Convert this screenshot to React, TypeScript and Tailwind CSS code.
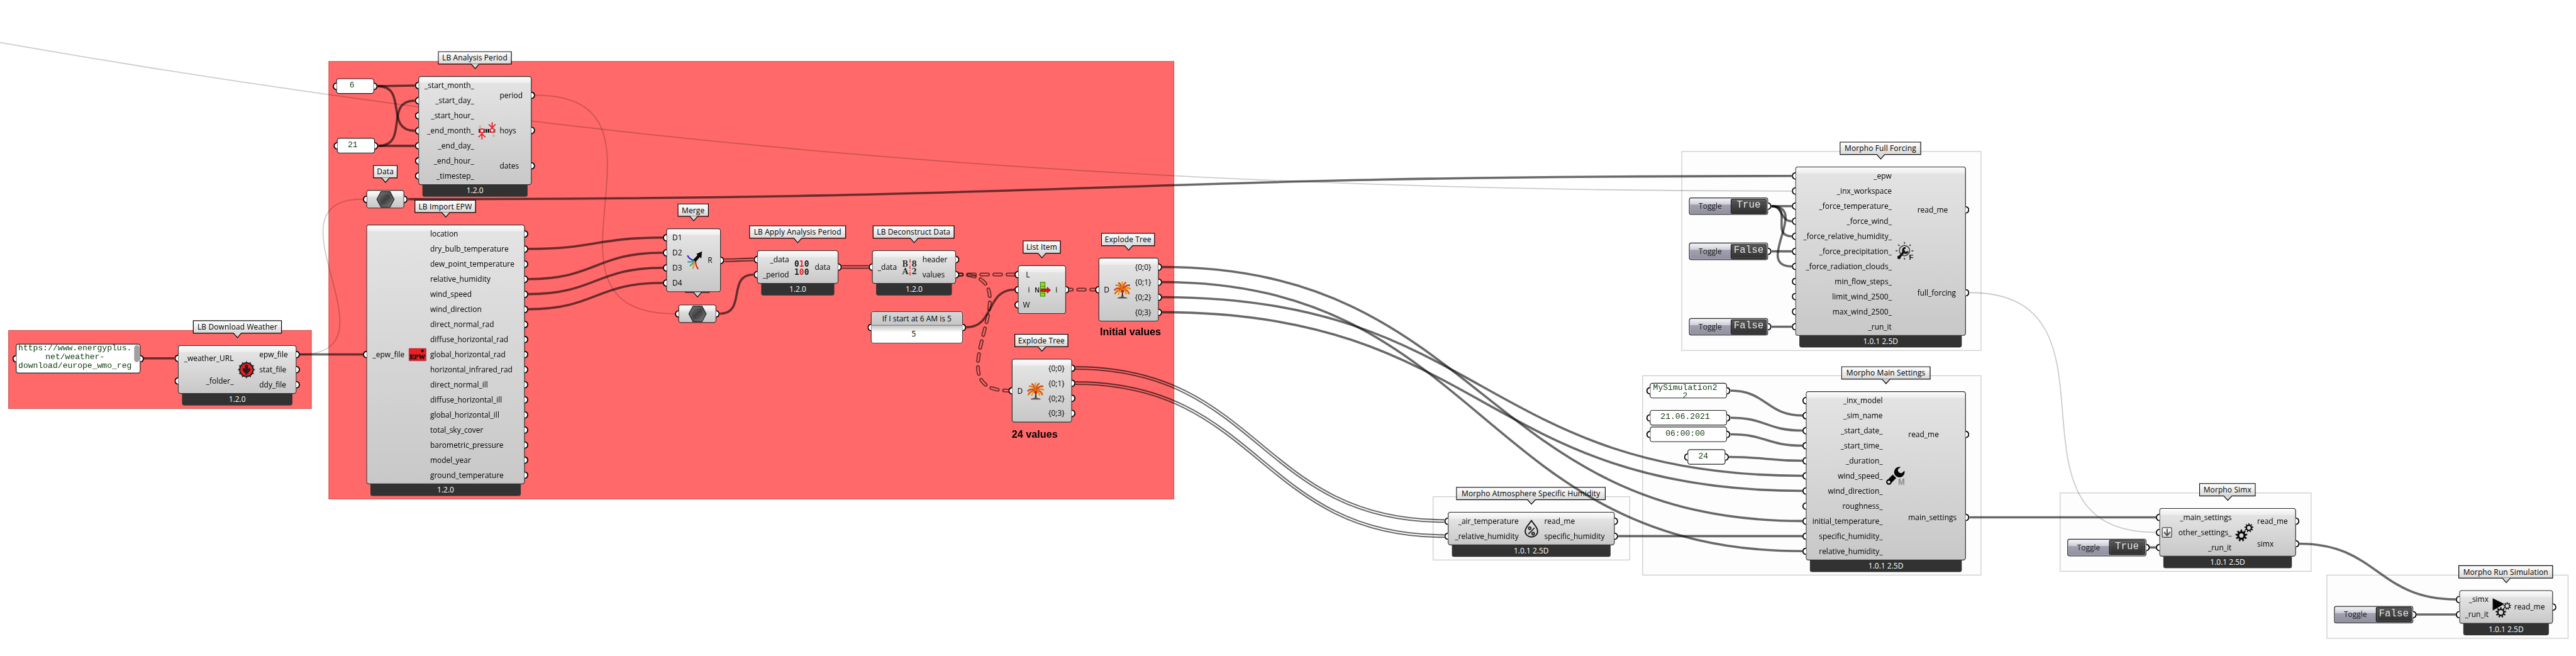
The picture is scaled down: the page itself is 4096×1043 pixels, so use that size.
import React from "react";

type Point = [number, number];

const SANS = "font-['Open_Sans','Noto_Sans',sans-serif]";
const MONO = "font-['Liberation_Mono',monospace]";

/* ---------- Icons (48 x 48 drawing box) ---------- */

function Icon({ children }: { children: React.ReactNode }) {
  return (
    <svg width="48" height="48" viewBox="0 0 48 48" className="block shrink-0 overflow-visible">
      {children}
    </svg>
  );
}

function gearPath(cx: number, cy: number, r: number, hole: number, teeth = 9) {
  const inner = r * 0.7;
  const step = (Math.PI * 2) / teeth;
  const at = (rad: number, a: number) => `${(cx + rad * Math.cos(a)).toFixed(2)} ${(cy + rad * Math.sin(a)).toFixed(2)}`;
  const pts: string[] = [];
  for (let i = 0; i < teeth; i++) {
    const a = i * step - Math.PI / 2;
    pts.push(at(inner, a - step * 0.3), at(r, a - step * 0.2), at(r, a + step * 0.2), at(inner, a + step * 0.3));
  }
  return `M${pts.join("L")}Z M${cx - hole} ${cy}a${hole} ${hole} 0 1 0 ${hole * 2} 0a${hole} ${hole} 0 1 0 ${-hole * 2} 0Z`;
}

const DownloadIcon = () => (
  <Icon>
    {[0, 30, 60, 90, 120, 150, 180, 210, 240, 270, 300, 330].map((a) => (
      <path key={a} d="M21.5 5L24 0.5L26.5 5Z" fill="#222" transform={`rotate(${a} 24 24)`} />
    ))}
    <circle cx="24" cy="24" r="18" fill="#ee1c24" stroke="#222" strokeWidth="3.5" />
    <path d="M20 11h8v11l6-3v7L24 38 14 26v-7l6 3Z" fill="#231f20" />
  </Icon>
);

const PeriodIcon = () => (
  <Icon>
    <path d="M2.5 24H46" stroke="#111" strokeWidth="10" strokeDasharray="4 2" />
    <path d="M6 9v8M42 33v8" stroke="#c9b9b5" strokeWidth="6" />
    <circle cx="11" cy="24" r="5" fill="#fff" stroke="#ee1c24" strokeWidth="3" />
    <circle cx="38" cy="23" r="5" fill="#fff" stroke="#ee1c24" strokeWidth="3" />
    <path d="M38 1v15M29 7l9 9 9-9M11 47V32M2 41l9-9 9 9" fill="none" stroke="#ee1c24" strokeWidth="3" />
  </Icon>
);

const EpwIcon = () => (
  <Icon>
    <rect x="1" y="7.5" width="46" height="33" rx="1.5" fill="#ee1c24" stroke="#7a3a3c" strokeWidth="1.5" strokeDasharray="3 2" />
    <circle cx="37" cy="14" r="4" fill="#222" />
    <text x="24" y="36" textAnchor="middle" textLength="41" lengthAdjust="spacingAndGlyphs" fontSize="17" fontWeight="700" fontFamily="Liberation Serif, serif" fill="#1a1010" stroke="#1a1010" strokeWidth="0.8">
      EPW
    </text>
  </Icon>
);

const MergeIcon = () => (
  <Icon>
    <g fill="none" strokeWidth="3.6" strokeLinecap="round">
      <path d="M5 12Q10 22 22 24" stroke="#2a1fe0" />
      <path d="M6 28Q14 29 22 25" stroke="#2aa39b" />
      <path d="M12 38Q18 33 22 26" stroke="#5aa53a" />
      <path d="M19 45Q22 36 23 27" stroke="#c9a03a" />
      <path d="M32 46Q26 38 26 27" stroke="#e02428" />
    </g>
    <path d="M20 22L31 10 28 7 43 0 41 19 37 15 26 28Z" fill="#0a0a0a" />
  </Icon>
);

const BINARY_DIGITS = [
  { text: "0", fill: "#1a1a1a", x: 4, y: 22 },
  { text: "1", fill: "#ee1c24", x: 17, y: 22 },
  { text: "0", fill: "#1a1a1a", x: 30, y: 22 },
  { text: "1", fill: "#1a1a1a", x: 4, y: 44 },
  { text: "0", fill: "#ee1c24", x: 17, y: 44 },
  { text: "0", fill: "#1a1a1a", x: 30, y: 44 },
];

const BinaryIcon = () => (
  <Icon>
    <g fontFamily="DejaVu Sans Mono, monospace" fontWeight="700" fontSize="24">
      {BINARY_DIGITS.map((d, i) => (
        <text key={i} x={d.x} y={d.y} textLength="13" lengthAdjust="spacingAndGlyphs" fill={d.fill}>
          {d.text}
        </text>
      ))}
    </g>
  </Icon>
);

const DeconstructIcon = () => (
  <Icon>
    <g fontFamily="DejaVu Serif, serif" fontWeight="700" fontSize="22" fill="#2c2c2c">
      <text x="4" y="22" textLength="16" lengthAdjust="spacingAndGlyphs">B</text>
      <text x="29" y="22" textLength="14" lengthAdjust="spacingAndGlyphs">8</text>
      <text x="4" y="43" textLength="17" lengthAdjust="spacingAndGlyphs">A</text>
      <text x="29" y="43" textLength="14" lengthAdjust="spacingAndGlyphs">2</text>
    </g>
    <path d="M25 3V46" stroke="#f0484e" strokeWidth="3.2" strokeDasharray="9 3 2 3" />
  </Icon>
);

const ListItemIcon = () => (
  <Icon>
    <rect x="18" y="4" width="12" height="37" fill="#8fe01c" stroke="#3b7d10" strokeWidth="1.8" />
    <path d="M18 15h12M18 33h12" stroke="#3b7d10" strokeWidth="1.5" />
    <text x="3" y="31" fontFamily="Liberation Sans, sans-serif" fontWeight="700" fontSize="18" fill="#222">N</text>
    <path d="M19 21.5h17V17L45 25l-9 8v-4.500H19Z" fill="#d9151a" stroke="#7d0d10" strokeWidth="1.2" />
  </Icon>
);

const TreeIcon = () => (
  <Icon>
    <path d="M24 25L22 44h5L26 25Z" fill="#43302f" />
    <path d="M12 46Q24 41 37 46Z" fill="#5b4a4a" stroke="#5b4a4a" strokeWidth="2" />
    <g fill="none" strokeLinecap="round" strokeWidth="4.200">
      <path d="M25 25Q12 22 5 34" stroke="#e0620f" />
      <path d="M25 24Q12 16 4 24" stroke="#c8431a" />
      <path d="M25 24Q16 10 8 12" stroke="#ea7a10" />
      <path d="M25 24Q20 8 15 6" stroke="#d24f17" />
      <path d="M25 24Q24 8 24 4" stroke="#f09a12" />
      <path d="M25 24Q28 8 33 5" stroke="#d8591a" />
      <path d="M25 24Q34 10 43 12" stroke="#c8431a" />
      <path d="M25 24Q37 16 45 21" stroke="#ec860f" />
      <path d="M25 25Q38 21 42 34" stroke="#de5c12" />
      <path d="M25 25Q16 26 14 36" stroke="#f0a012" />
      <path d="M25 25Q33 26 35 35" stroke="#f09412" />
    </g>
    <circle cx="24.500" cy="28" r="4" fill="#c01f1a" />
  </Icon>
);

const ForcingIcon = () => (
  <Icon>
    {[0, 45, 90, 135, 180, 225, 270, 315].map((a) => (
      <path key={a} d="M24 4V-1" stroke="#444" strokeWidth="3" transform={`rotate(${a} 24 22.500)`} />
    ))}
    <circle cx="24" cy="22" r="13.500" fill="none" stroke="#4a4a4a" strokeWidth="3" />
    <path d="M23 24L10 40" stroke="#111" strokeWidth="6" strokeLinecap="round" />
    <circle cx="9.500" cy="40" r="4.500" fill="#111" />
    <path d="M27 15a6.500 6.500 0 1 0 5.500 9" fill="none" stroke="#111" strokeWidth="5" />
    <text x="36" y="47" fontFamily="Liberation Sans, sans-serif" fontWeight="700" fontSize="19" fill="#222">F</text>
  </Icon>
);

const WrenchIcon = () => (
  <Icon>
    <path d="M38 0.300A14 14 0 1 0 47.800 10L42 15.500Q36.500 18 32.500 13.500Q29 9 31.500 5Z" fill="#050505" />
    <path d="M21.500 25L6.700 39.800" stroke="#050505" strokeWidth="13" />
    <circle cx="6.700" cy="40" r="7.300" fill="#050505" />
    <circle cx="6.700" cy="40" r="3.700" fill="#e4e4e4" />
    <text x="31" y="47.500" textLength="18" lengthAdjust="spacingAndGlyphs" fontFamily="Liberation Sans, sans-serif" fontWeight="700" fontSize="24" fill="#8b8b8b">M</text>
  </Icon>
);

const HumidityIcon = () => (
  <Icon>
    <path d="M24 2C20 10 7.500 20 7.500 30.500a16.500 15.500 0 0 0 33 0C40.500 20 28 10 24 2Z" fill="none" stroke="#1c1c1c" strokeWidth="3.200" strokeLinejoin="round" />
    <circle cx="19.500" cy="22.500" r="3.200" fill="none" stroke="#1c1c1c" strokeWidth="3" />
    <circle cx="28.500" cy="37" r="3.200" fill="none" stroke="#1c1c1c" strokeWidth="3" />
    <path d="M16 38L32 22" stroke="#1c1c1c" strokeWidth="3" />
  </Icon>
);

const GearsIcon = () => (
  <Icon>
    <path d={gearPath(16, 32, 15.8, 5.6)} fill="#0a0a0a" fillRule="evenodd" />
    <path d={gearPath(36, 11.5, 11.8, 4.8)} fill="#0a0a0a" fillRule="evenodd" />
  </Icon>
);

const RunIcon = () => (
  <Icon>
    <path d="M1 0.500L32 15.500L1 33Z" fill="#050505" />
    <path d={gearPath(22.5, 38, 13.8, 6)} fill="#0f0f0f" fillRule="evenodd" />
    <path d={gearPath(39.5, 21, 10, 4.8)} fill="#0f0f0f" fillRule="evenodd" />
  </Icon>
);

const HexIcon = () => (
  <Icon>
    <defs>
      <linearGradient id="hexFill" x1="0" y1="0" x2="1" y2="1">
        <stop offset="0" stopColor="#7d7d7d" />
        <stop offset="0.5" stopColor="#3f3f3f" />
        <stop offset="1" stopColor="#858585" />
      </linearGradient>
    </defs>
    <path d="M12 3.500H36L47 24 36 44.500H12L1 24Z" fill="url(#hexFill)" stroke="#2a2a2a" strokeWidth="2" />
    <path d="M14.500 7.500H33.500L42.500 24 33.500 40.500H14.500L5.500 24Z" fill="none" stroke="#6f6f6f" strokeWidth="1.500" />
  </Icon>
);

/* ---------- Canvas building blocks ---------- */

function Grip({ side }: { side: "in" | "out" }) {
  return (
    <i
      className={
        side === "in"
          ? "absolute top-1/2 -left-[11px] h-5 w-[10px] -translate-y-1/2 rounded-l-full border-[3.5px] border-r-0 border-black bg-white"
          : "absolute top-1/2 -right-[11px] h-5 w-[10px] -translate-y-1/2 rounded-r-full border-[3.5px] border-l-0 border-black bg-white"
      }
    />
  );
}

function Group({ x, y, r, b, red = false }: { x: number; y: number; r: number; b: number; red?: boolean }) {
  return (
    <div
      className={red ? "absolute border-2 border-[#cf5f5f] bg-[#ff6969]" : "absolute border-2 border-[#cacaca] bg-[#fdfdfd]"}
      style={{ left: x, top: y, width: r - x, height: b - y }}
    />
  );
}

function Tag({ x, r, y, tip, text }: { x: number; r: number; y: number; tip: number; text: string }) {
  return (
    <div
      className="absolute flex h-[35px] items-center justify-center border-2 border-black bg-linear-to-b from-white to-[#d9d9d9]"
      style={{ left: x, top: y, width: r - x }}
    >
      <span className={`${SANS} text-[20px] leading-none tracking-[0.2px] whitespace-nowrap text-black`}>{text}</span>
      <svg width="24" height="15" viewBox="0 0 24 15" className="absolute top-[31px]" style={{ left: tip - x - 14 }}>
        <path d="M2 0V1L12 13 22 1V0Z" fill="#d9d9d9" />
        <path d="M1.500 1L12 13 22.500 1" fill="none" stroke="#000" strokeWidth="2" />
      </svg>
    </div>
  );
}

interface NodeProps {
  x: number;
  r: number;
  y: number;
  h: number;
  inputs: string[];
  inRight: number;
  outputs: string[];
  outLeft: number;
  icon: React.ReactNode;
  version?: string;
  variable?: string;
}

function Component({ x, r, y, h, inputs, inRight, outputs, outLeft, icon, version, variable }: NodeProps) {
  return (
    <div className="absolute" style={{ left: x, top: y, width: r - x }}>
      <div
        className="relative z-10 flex rounded-[7px] border-2 border-[#333] bg-[#c8c8c8] bg-[linear-gradient(to_bottom,#fdfdfd_0,#ececec_16px,#e3e3e3_17px,#c8c8c8_100%)] py-[2.5px]"
        style={{ height: h }}
      >
        <ul className="flex flex-col" style={{ width: inRight - x - 2 }}>
          {inputs.map((name) => (
            <li key={name} className={`relative flex flex-1 items-center justify-end ${SANS} text-[20px] leading-none whitespace-nowrap text-black`}>
              <Grip side="in" />
              {name === variable && (
                <b className="absolute left-[5px] flex h-[28px] w-[27px] items-center justify-center rounded-[4px] border-2 border-[#444] bg-linear-to-b from-white to-[#d0d0d0]">
                  <svg width="20" height="22" viewBox="0 0 20 22" fill="none" stroke="#555" strokeWidth="3.500">
                    <path d="M10 1V19M2 10l8 9 8-9" />
                  </svg>
                </b>
              )}
              {name}
            </li>
          ))}
        </ul>
        <div className="flex items-center justify-center" style={{ width: outLeft - inRight }}>
          {icon}
        </div>
        <ul className="flex flex-1 flex-col">
          {outputs.map((name) => (
            <li key={name} className={`relative flex flex-1 items-center ${SANS} text-[20px] leading-none whitespace-nowrap text-black`}>
              <Grip side="out" />
              {name}
            </li>
          ))}
        </ul>
      </div>
      {version && (
        <div className={`relative mx-[11px] -mt-1 flex h-[35px] items-center justify-center rounded-b-[6px] bg-[#323232] pt-[3px] ${SANS} text-[20px] leading-none text-white`}>
          {version}
        </div>
      )}
    </div>
  );
}

function DataParam({ x, y }: { x: number; y: number }) {
  return (
    <div
      className="absolute flex h-[49px] w-[101px] items-center justify-center rounded-[7px] border-2 border-[#333] bg-[linear-gradient(to_bottom,#fdfdfd_0,#e6e6e6_16px,#dcdcdc_17px,#c8c8c8_100%)]"
      style={{ left: x, top: y }}
    >
      <Grip side="in" />
      <HexIcon />
      <Grip side="out" />
    </div>
  );
}

function Panel({ x, r, y, lines }: { x: number; r: number; y: number; lines: string[] }) {
  return (
    <div className="absolute h-[41px] rounded-[7px] border-2 border-[#222] bg-white" style={{ left: x, top: y, width: r - x }}>
      <Grip side="in" />
      <div
        className={`flex h-full flex-col overflow-hidden pr-[17px] ${lines.length > 1 ? "justify-start" : "justify-center pb-[3px]"} ${MONO} text-center text-[21.800px] leading-[22px] text-[#0d3a0d]`}
      >
        {lines.map((l, i) => (
          <p key={i} className="shrink-0 whitespace-nowrap">{l}</p>
        ))}
      </div>
      <Grip side="out" />
    </div>
  );
}

function Toggle({ x, cy, value }: { x: number; cy: number; value: "True" | "False" }) {
  return (
    <div
      className="absolute flex h-[46px] w-[210px] items-center rounded-[6px] border-2 border-[#2b2b2b] bg-[linear-gradient(to_bottom,#f4f4f8_0,#cfcfd9_38%,#a1a1b0_42%,#8f8f9f_100%)] pr-[2px] shadow-[inset_0_0_0_1px_#d9d9e4]"
      style={{ left: x, top: cy - 23 }}
    >
      <span className={`flex-1 text-center ${SANS} text-[20px] leading-none text-[#1c1c1c]`}>Toggle</span>
      <span className={`flex h-[39px] w-[95px] items-center justify-center rounded-[3px] border-[2.5px] border-black bg-linear-to-b from-[#565656] to-[#303030] pb-[5px] ${MONO} text-[26.500px] leading-none text-[#e6e6e6] shadow-[inset_0_0_0_1px_#8a8a8a]`}>
        {value}
      </span>
      <Grip side="out" />
    </div>
  );
}

/* ---------- Wires ---------- */

type WireKind = "item" | "list" | "tree" | "faint";

function wirePath([x0, y0]: Point, [x1, y1]: Point) {
  const dx = Math.abs(x1 - x0);
  const dy = Math.abs(y1 - y0);
  const k = Math.max(0, Math.min(0.47, (dy / dx - 0.45) * 0.37));
  const h = dx / 2 + k * dy;
  return `M${x0} ${y0}C${x0 + h} ${y0} ${x1 - h} ${y1} ${x1} ${y1}`;
}

const WIRES: { from: Point; to: Point; kind: WireKind }[] = [
  { from: [381, 951], to: [463, 951], kind: "item" },
  { from: [796, 940.5], to: [963, 940.5], kind: "item" },
  { from: [796, 940.5], to: [963, 528.5], kind: "faint" },
  { from: [1002, 228.5], to: [1101, 227], kind: "item" },
  { from: [1002, 228.5], to: [1101, 347], kind: "item" },
  { from: [1004, 387], to: [1101, 267], kind: "item" },
  { from: [1004, 387], to: [1101, 387], kind: "item" },
  { from: [1083, 528.5], to: [4755, 467], kind: "item" },
  { from: [1420, 252.5], to: [1791, 832.5], kind: "faint" },
  { from: [1402, 660.5], to: [1759, 630.5], kind: "item" },
  { from: [1402, 740.5], to: [1759, 670.5], kind: "item" },
  { from: [1402, 780.5], to: [1759, 710.5], kind: "item" },
  { from: [1402, 820.5], to: [1759, 750.5], kind: "item" },
  { from: [1922, 690.5], to: [2000, 688.5], kind: "list" },
  { from: [1910, 832.5], to: [2000, 728.5], kind: "item" },
  { from: [2234, 708.5], to: [2305, 708.5], kind: "list" },
  { from: [2546, 728.5], to: [2692, 728.5], kind: "tree" },
  { from: [2546, 728.5], to: [2676, 1036.5], kind: "tree" },
  { from: [2564, 868.5], to: [2692, 768.5], kind: "item" },
  { from: [2838, 768.5], to: [2906, 768.5], kind: "tree" },
  { from: [3084, 708.5], to: [4783, 1382.5], kind: "item" },
  { from: [3084, 748.5], to: [4783, 1462.5], kind: "item" },
  { from: [3084, 788.5], to: [4783, 1262.5], kind: "item" },
  { from: [3084, 828.5], to: [4783, 1302.5], kind: "item" },
  { from: [2854, 976.5], to: [3833, 1382.5], kind: "list" },
  { from: [2854, 1016.5], to: [3833, 1422.5], kind: "list" },
  { from: [4294, 1422.5], to: [4783, 1422.5], kind: "item" },
  { from: [4701, 547], to: [4755, 547], kind: "item" },
  { from: [4701, 547], to: [4755, 587], kind: "item" },
  { from: [4701, 547], to: [4755, 627], kind: "item" },
  { from: [4701, 547], to: [4755, 707], kind: "item" },
  { from: [4701, 667], to: [4755, 667], kind: "item" },
  { from: [4701, 867], to: [4755, 867], kind: "item" },
  { from: [4592, 1036.5], to: [4783, 1102.5], kind: "item" },
  { from: [4592, 1108.5], to: [4783, 1142.5], kind: "item" },
  { from: [4592, 1152.5], to: [4783, 1182.5], kind: "item" },
  { from: [4588, 1212.5], to: [4783, 1222.5], kind: "item" },
  { from: [5226, 1372.7], to: [5721, 1372.7], kind: "item" },
  { from: [5226, 776.5], to: [5721, 1412.7], kind: "faint" },
  { from: [5704, 1452.7], to: [5721, 1452.7], kind: "item" },
  { from: [6102, 1442.7], to: [6517, 1590.5], kind: "item" },
  { from: [6412, 1630.5], to: [6517, 1630.5], kind: "item" },
];

function Wires() {
  const box = { x: 0, y: 0, width: 6836, height: 1740 };
  return (
    <svg width="6836" height="1740" viewBox="0 0 6836 1740" className="absolute inset-0" fill="none" stroke="#000">
      <path d="M0 113C1500 376 2950 507 4755 507" strokeOpacity="0.2" strokeWidth="3" />
      {WIRES.map(({ from, to, kind }, i) => {
        const d = wirePath(from, to);
        if (kind === "item") return <path key={i} d={d} strokeOpacity="0.59" strokeWidth="6" />;
        if (kind === "faint") return <path key={i} d={d} strokeOpacity="0.2" strokeWidth="3" />;
        const tree = kind === "tree";
        const dash = tree ? { strokeDasharray: "18 17", strokeDashoffset: 12, strokeLinecap: "round" as const } : {};
        return (
          <g key={i}>
            <mask id={`hollow${i}`} maskUnits="userSpaceOnUse" {...box}>
              <path d={d} stroke="#fff" strokeWidth={10} {...dash} />
              <path d={d} stroke="#000" strokeWidth={tree ? 4 : 3} {...dash} />
            </mask>
            <rect {...box} fill="#000" fillOpacity="0.59" stroke="none" mask={`url(#hollow${i})`} />
          </g>
        );
      })}
    </svg>
  );
}

/* ---------- Definition ---------- */

const GROUPS = [
  { x: 22, y: 876, r: 827, b: 1085, red: true },
  { x: 872, y: 162, r: 3116, b: 1325, red: true },
  { x: 4462, y: 401, r: 5258, b: 931 },
  { x: 4358, y: 996, r: 5258, b: 1527 },
  { x: 3802, y: 1317, r: 4326, b: 1487 },
  { x: 5466, y: 1307, r: 6134, b: 1517 },
  { x: 6174, y: 1525, r: 6816, b: 1695 },
];

const TAGS = [
  { x: 512, r: 748, y: 850, tip: 629.5, text: "LB Download Weather" },
  { x: 1162, r: 1358, y: 136, tip: 1260.5, text: "LB Analysis Period" },
  { x: 990, r: 1055, y: 438, tip: 1022.5, text: "Data" },
  { x: 1100, r: 1263, y: 530, tip: 1182.5, text: "LB Import EPW" },
  { x: 1798, r: 1881, y: 540, tip: 1840.5, text: "Merge" },
  { x: 1818, r: 1883, y: 742, tip: 1850.5, text: "Data" },
  { x: 1988, r: 2245, y: 598, tip: 2116.5, text: "LB Apply Analysis Period" },
  { x: 2316, r: 2533, y: 598, tip: 2425.5, text: "LB Deconstruct Data" },
  { x: 2714, r: 2815, y: 638, tip: 2764.5, text: "List Item" },
  { x: 2922, r: 3065, y: 618, tip: 2994.5, text: "Explode Tree" },
  { x: 2692, r: 2835, y: 886, tip: 2764.5, text: "Explode Tree" },
  { x: 4882, r: 5098, y: 376, tip: 4990.5, text: "Morpho Full Forcing" },
  { x: 4886, r: 5123, y: 972, tip: 5004.5, text: "Morpho Main Settings" },
  { x: 3864, r: 4261, y: 1292, tip: 4063.5, text: "Morpho Atmosphere Specific Humidity" },
  { x: 5836, r: 5986, y: 1282, tip: 5911.5, text: "Morpho Simx" },
  { x: 6524, r: 6775, y: 1500, tip: 6650.5, text: "Morpho Run Simulation" },
];

const BRANCHES = ["{0;0}", "{0;1}", "{0;2}", "{0;3}"];

const NODES: NodeProps[] = [
  { x: 472, r: 787, y: 916, h: 129, inputs: ["_weather_URL", "_folder_"], inRight: 620, outputs: ["epw_file", "stat_file", "ddy_file"], outLeft: 688, icon: <DownloadIcon />, version: "1.2.0" },
  { x: 1110, r: 1411, y: 202, h: 289, inputs: ["_start_month_", "_start_day_", "_start_hour_", "_end_month_", "_end_day_", "_end_hour_", "_timestep_"], inRight: 1258, outputs: ["period", "hoys", "dates"], outLeft: 1326, icon: <PeriodIcon />, version: "1.2.0" },
  {
    x: 972, r: 1393, y: 596, h: 689, inputs: ["_epw_file"], inRight: 1073.5,
    outputs: ["location", "dry_bulb_temperature", "dew_point_temperature", "relative_humidity", "wind_speed", "wind_direction", "direct_normal_rad", "diffuse_horizontal_rad", "global_horizontal_rad", "horizontal_infrared_rad", "direct_normal_ill", "diffuse_horizontal_ill", "global_horizontal_ill", "total_sky_cover", "barometric_pressure", "model_year", "ground_temperature"],
    outLeft: 1141.5, icon: <EpwIcon />, version: "1.2.0",
  },
  { x: 1768, r: 1913, y: 606, h: 169, inputs: ["D1", "D2", "D3", "D4"], inRight: 1810, outputs: ["R"], outLeft: 1878, icon: <MergeIcon /> },
  { x: 2009, r: 2225, y: 664, h: 89, inputs: ["_data", "_period"], inRight: 2094, outputs: ["data"], outLeft: 2162, icon: <BinaryIcon />, version: "1.2.0" },
  { x: 2314, r: 2537, y: 664, h: 89, inputs: ["_data"], inRight: 2380, outputs: ["header", "values"], outLeft: 2448, icon: <DeconstructIcon />, version: "1.2.0" },
  { x: 2701, r: 2829, y: 704, h: 129, inputs: ["L", "i", "W"], inRight: 2733, outputs: ["i"], outLeft: 2801, icon: <ListItemIcon /> },
  { x: 2915, r: 3075, y: 684, h: 169, inputs: ["D"], inRight: 2944, outputs: BRANCHES, outLeft: 3012, icon: <TreeIcon /> },
  { x: 2685, r: 2845, y: 952, h: 169, inputs: ["D"], inRight: 2714, outputs: BRANCHES, outLeft: 2782, icon: <TreeIcon /> },
  {
    x: 4764, r: 5217, y: 442, h: 449,
    inputs: ["_epw", "_inx_workspace", "_force_temperature_", "_force_wind_", "_force_relative_humidity_", "_force_precipitation_", "_force_radiation_clouds_", "min_flow_steps_", "limit_wind_2500_", "max_wind_2500_", "_run_it"],
    inRight: 5020, outputs: ["read_me", "full_forcing"], outLeft: 5088, icon: <ForcingIcon />, version: "1.0.1 2.5D",
  },
  {
    x: 4792, r: 5217, y: 1038, h: 449,
    inputs: ["_inx_model", "_sim_name", "_start_date_", "_start_time_", "_duration_", "wind_speed_", "wind_direction_", "roughness_", "initial_temperature_", "specific_humidity_", "relative_humidity_"],
    inRight: 4996, outputs: ["read_me", "main_settings"], outLeft: 5064, icon: <WrenchIcon />, version: "1.0.1 2.5D",
  },
  { x: 3842, r: 4285, y: 1358, h: 89, inputs: ["_air_temperature", "_relative_humidity"], inRight: 4030, outputs: ["read_me", "specific_humidity"], outLeft: 4098, icon: <HumidityIcon />, version: "1.0.1 2.5D" },
  { x: 5730, r: 6093, y: 1348, h: 129, inputs: ["_main_settings", "other_settings_", "_run_it"], inRight: 5922, outputs: ["read_me", "simx"], outLeft: 5990, icon: <GearsIcon />, version: "1.0.1 2.5D", variable: "other_settings_" },
  { x: 6526, r: 6775, y: 1566, h: 89, inputs: ["_simx", "_run_it"], inRight: 6604, outputs: ["read_me"], outLeft: 6672, icon: <RunIcon />, version: "1.0.1 2.5D" },
];

export default function App() {
  return (
    <main className="h-[1043px] w-[4096px] overflow-hidden bg-white">
      <div className="relative h-[1740px] w-[6836px] origin-top-left scale-[0.59918]">
        {GROUPS.map((g) => (
          <Group key={`${g.x}-${g.y}`} {...g} />
        ))}
        {TAGS.map((t) => (
          <Tag key={`${t.x}-${t.y}`} {...t} />
        ))}

        <Wires />

        {NODES.map((n) => (
          <Component key={`${n.x}-${n.y}`} {...n} />
        ))}

        <DataParam x={972} y={504} />
        <DataParam x={1800} y={808} />

        <Panel x={892} r={993} y={208} lines={["6"]} />
        <Panel x={894} r={995} y={366} lines={["21"]} />
        <Panel x={4378} r={4583} y={1016} lines={["MySimulation2", "2"]} />
        <Panel x={4378} r={4583} y={1088} lines={["21.06.2021"]} />
        <Panel x={4378} r={4583} y={1132} lines={["06:00:00"]} />
        <Panel x={4478} r={4579} y={1192} lines={["24"]} />

        <div className="absolute top-[912px] left-[42px] h-[79px] w-[331px] rounded-[7px] border-2 border-[#222] bg-white">
          <Grip side="in" />
          <div className={`h-full overflow-hidden pr-[17px] ${MONO} text-center text-[21.800px] leading-6 text-[#0d3a0d]`}>
            <p className="-mt-[2px]">https://www.energyplus.</p>
            <p>net/weather-</p>
            <p>download/europe_wmo_reg</p>
          </div>
          <i className="absolute top-[2px] right-px h-[45px] w-[14px] rounded-full bg-[#a0a0a0]" />
          <Grip side="out" />
        </div>

        <div className={`absolute top-[826px] left-[2311px] flex h-[85px] w-[244px] flex-col rounded-[7px] border-2 border-[#333] bg-white text-center ${SANS} text-[20px] leading-none`}>
          <Grip side="in" />
          <div className="flex h-[36px] items-center justify-center rounded-t-[5px] border-b-2 border-black bg-linear-to-b from-[#d6d6d6] to-[#c6c6c6]">
            If I start at 6 AM is 5
          </div>
          <div className="flex flex-1 items-center justify-center rounded-b-[5px] bg-[linear-gradient(to_bottom,#c4c4c4_0,#fff_18px)] pr-[16px] pb-[2px]">5</div>
          <Grip side="out" />
        </div>

        <Toggle x={4482} cy={547} value="True" />
        <Toggle x={4482} cy={667} value="False" />
        <Toggle x={4482} cy={867} value="False" />
        <Toggle x={5486} cy={1452.5} value="True" />
        <Toggle x={6194} cy={1630.5} value="False" />

        <p className="absolute top-[867px] left-[2919px] font-['Liberation_Sans',sans-serif] text-[27px] leading-none font-bold whitespace-nowrap">Initial values</p>
        <p className="absolute top-[1139px] left-[2685px] font-['Liberation_Sans',sans-serif] text-[27px] leading-none font-bold whitespace-nowrap">24 values</p>
      </div>
    </main>
  );
}
